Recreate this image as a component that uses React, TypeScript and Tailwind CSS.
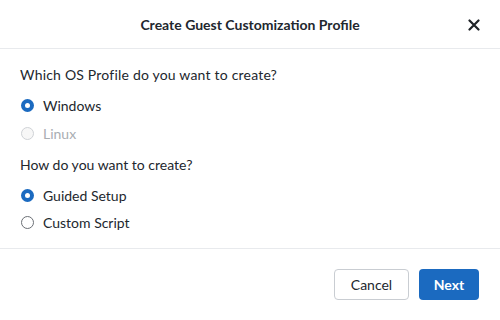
import React from "react";

function Radio({ label, checked, disabled, h = "h-[28px]" }: { label: string; checked?: boolean; disabled?: boolean; h?: string }) {
  return (
    <div className={"flex items-center " + h}>
      {checked ? (
        <span className="w-[13px] h-[13px] rounded-full bg-[#1b6ac0] flex items-center justify-center">
          <span className="w-[5px] h-[5px] rounded-full bg-white" />
        </span>
      ) : (
        <span
          className={
            "w-[13px] h-[13px] rounded-full border " +
            (disabled ? "border-[#cfd2d6] bg-[#f7f7f7]" : "border-[#6b6f75] bg-white")
          }
        />
      )}
      <span className={"ml-[9px] text-[14px] " + (disabled ? "text-[#a9adb2]" : "text-[#22272e]")}>{label}</span>
    </div>
  );
}

export default function App() {
  return (
    <div
      className="w-[500px] h-[320px] bg-white flex flex-col"
      style={{ fontFamily: "Lato, 'Open Sans', sans-serif" }}
    >
      <div className="h-[49px] flex items-center justify-center relative border-b border-[#e8eaed] shrink-0">
        <span className="text-[14px] font-bold text-[#22272e]">Create Guest Customization Profile</span>
        <svg className="absolute right-[20px] top-[19px]" width="12" height="12" viewBox="0 0 12 12">
          <path d="M1.5 1.5 L10.5 10.5 M10.5 1.5 L1.5 10.5" stroke="#1f2328" strokeWidth="2.2" strokeLinecap="round" />
        </svg>
      </div>
      <div className="flex-1 px-[20px] pt-[16px] flex flex-col">
        <div className="text-[14px] text-[#22272e] h-[20px] leading-[20px] tracking-[0.2px]">Which OS Profile do you want to create?</div>
        <div className="mt-[6px] ml-[1px]">
          <Radio label="Windows" checked />
          <Radio label="Linux" disabled />
        </div>
        <div className="text-[14px] text-[#22272e] h-[20px] leading-[20px] mt-[8px]">How do you want to create?</div>
        <div className="mt-[6px] ml-[1px]">
          <Radio label="Guided Setup" checked />
          <Radio label="Custom Script" h="h-[26px]" />
        </div>
      </div>
      <div className="h-[72px] border-t border-[#e8eaed] flex items-center justify-end pr-[21px] gap-[10px] shrink-0">
        <button className="w-[75px] h-[31px] border border-[#c9cdd2] rounded-[4px] bg-white text-[14px] text-[#22272e]">
          Cancel
        </button>
        <button className="w-[60px] h-[31px] rounded-[4px] bg-[#1b6ac0] text-[14px] font-bold text-white">
          Next
        </button>
      </div>
    </div>
  );
}
